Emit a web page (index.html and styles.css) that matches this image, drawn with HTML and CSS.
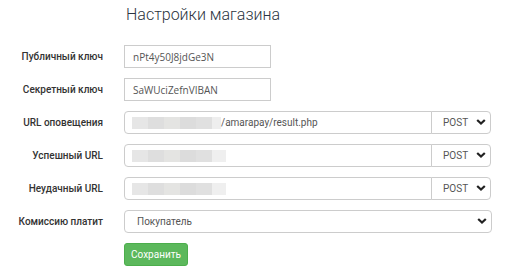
FILE: index.html
```html
<!DOCTYPE html>
<html lang="ru">
<head>
    <meta charset="UTF-8">
    <meta name="viewport" content="width=device-width, initial-scale=1.0">
    <title>Настройки магазина</title>
    <link rel="stylesheet" href="styles.css">
</head>
<body>
    <h1 class="title">Настройки магазина</h1>

    <form class="settings">
        <div class="row">
            <label class="label">Публичный ключ</label>
            <input class="field short" type="text" value="nPt4y50J8jdGe3N">
        </div>
        <div class="row">
            <label class="label">Секретный ключ</label>
            <input class="field short" type="text" value="SaWUciZefnVIBAN">
        </div>
        <div class="row">
            <label class="label">URL оповещения</label>
            <div class="group">
                <div class="field url">
                    <span class="hidden-part">
                        <i class="b1"></i><i class="b2"></i><i class="b3"></i><i class="b4"></i><i class="b5"></i><i class="b6"></i>
                    </span>
                    <span class="url-text">/amarapay/result.php</span>
                </div>
                <div class="select method">POST
                    <svg class="chevron" viewBox="0 0 10 6"><polyline points="1.2,1 5,4.6 8.8,1"/></svg>
                </div>
            </div>
        </div>
        <div class="row">
            <label class="label">Успешный URL</label>
            <div class="group">
                <div class="field url">
                    <span class="hidden-part">
                        <i class="b1"></i><i class="b2"></i><i class="b3"></i><i class="b4"></i><i class="b5"></i><i class="b7"></i>
                    </span>
                </div>
                <div class="select method">POST
                    <svg class="chevron" viewBox="0 0 10 6"><polyline points="1.2,1 5,4.6 8.8,1"/></svg>
                </div>
            </div>
        </div>
        <div class="row">
            <label class="label">Неудачный URL</label>
            <div class="group">
                <div class="field url">
                    <span class="hidden-part">
                        <i class="b1"></i><i class="b2"></i><i class="b3"></i><i class="b4"></i><i class="b5"></i><i class="b7"></i>
                    </span>
                </div>
                <div class="select method">POST
                    <svg class="chevron" viewBox="0 0 10 6"><polyline points="1.2,1 5,4.6 8.8,1"/></svg>
                </div>
            </div>
        </div>
        <div class="row">
            <label class="label">Комиссию платит</label>
            <div class="select wide">Покупатель
                <svg class="chevron" viewBox="0 0 10 6"><polyline points="1.2,1 5,4.6 8.8,1"/></svg>
            </div>
        </div>
        <div class="row">
            <span class="label"></span>
            <button class="save" type="button">Сохранить</button>
        </div>
    </form>
</body>
</html>
```

FILE: styles.css
```css
body {
    margin: 0;
    font-family: Roboto, Arial, sans-serif;
    color: #333;
    background: #fff;
}
.title {
    margin: 0 0 0 126px;
    padding-top: 4px;
    font-size: 16px;
    font-weight: 300;
    line-height: 21px;
    height: 41px;
    color: #2b3440;
}
.row {
    display: flex;
    align-items: center;
    height: 23px;
    margin-bottom: 10px;
}
.label {
    width: 103px;
    margin-right: 21px;
    text-align: right;
    font-size: 10px;
    font-weight: 500;
    color: #333;
}
.field {
    box-sizing: border-box;
    height: 23px;
    border: 1px solid #ccc;
    padding: 0 8px;
    font-family: "Open Sans", Arial, sans-serif;
    font-size: 10px;
    color: #555;
    background: #fff;
}
.short {
    width: 147px;
    border-radius: 0;
}
.group {
    display: flex;
    width: 368px;
}
.url {
    display: flex;
    align-items: center;
    width: 308px;
    padding-left: 7px;
    border-radius: 4px 0 0 4px;
    font-family: Roboto, Arial, sans-serif;
}
.hidden-part {
    display: flex;
    height: 12px;
}
.hidden-part i {
    display: block;
    width: 16px;
}
.b1 { background: #e6e6e6; }
.b2 { background: #dedede; }
.b3 { background: #e4e4e2; }
.b4 { background: #dcdcdc; }
.b5 { background: #e0e0e0; }
.b6 { background: #eeeeee; width: 9px !important; }
.b7 { background: #efefef; width: 14px !important; }
.select {
    box-sizing: border-box;
    display: flex;
    align-items: center;
    justify-content: space-between;
    height: 23px;
    border: 1px solid #ccc;
    background: #fff;
    font-size: 10px;
    color: #555;
}
.method {
    width: 60px;
    margin-left: -1px;
    padding: 0 4px 0 11px;
    border-radius: 0 4px 4px 0;
}
.wide {
    width: 368px;
    padding: 0 4px 0 12px;
    border-radius: 4px;
}
.chevron {
    width: 10px;
    height: 6px;
    margin-top: -2px;
    overflow: visible;
    fill: none;
    stroke: #222;
    stroke-width: 2.2;
}
.save {
    height: 23px;
    width: 64px;
    padding: 0;
    border: 1px solid #4cae4c;
    border-radius: 3px;
    background: #5cb85c;
    color: #fff;
    font-family: inherit;
    font-size: 10px;
    cursor: pointer;
}
```
